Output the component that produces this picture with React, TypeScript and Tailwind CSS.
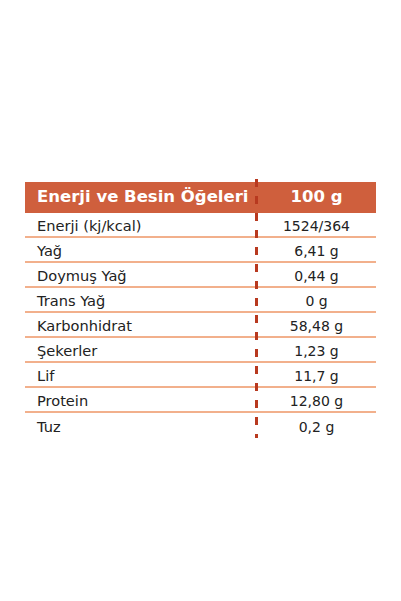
const rows: [string, string][] = [
  ['Enerji (kj/kcal)', '1524/364'],
  ['Yağ', '6,41 g'],
  ['Doymuş Yağ', '0,44 g'],
  ['Trans Yağ', '0 g'],
  ['Karbonhidrat', '58,48 g'],
  ['Şekerler', '1,23 g'],
  ['Lif', '11,7 g'],
  ['Protein', '12,80 g'],
  ['Tuz', '0,2 g'],
];

export default function App() {
  return (
    <div className="w-[401px] h-[601px] bg-white pt-[182px] pl-[25px] font-['DejaVu_Sans',sans-serif] text-[#222]">
      <div className="relative w-[351px]">
        {/* header */}
        <div className="flex h-[31px] items-center bg-[#cf5f3d] text-white font-bold text-[16.5px]">
          <div className="w-[232px] pl-[12px] whitespace-nowrap">Enerji ve Besin Öğeleri</div>
          <div className="flex-1 text-center">100 g</div>
        </div>
        {rows.map(([label, value], i) => (
          <div
            key={label}
            className={
              i < rows.length - 1
                ? 'flex h-[25px] items-center pt-[3px] border-b-2 border-[#f2b08c] text-[14.6px]'
                : 'flex h-[25px] items-center pt-[3px] text-[14.6px]'
            }
          >
            <div className="w-[232px] pl-[12px]">{label}</div>
            <div className="flex-1 text-center text-[14px]">{value}</div>
          </div>
        ))}
        {/* dashed divider */}
        <div className="absolute left-[230px] top-[-3px] bottom-0 w-[3px] bg-[repeating-linear-gradient(to_bottom,#b8391f_0_8px,transparent_8px_17px)]" />
      </div>
    </div>
  );
}
